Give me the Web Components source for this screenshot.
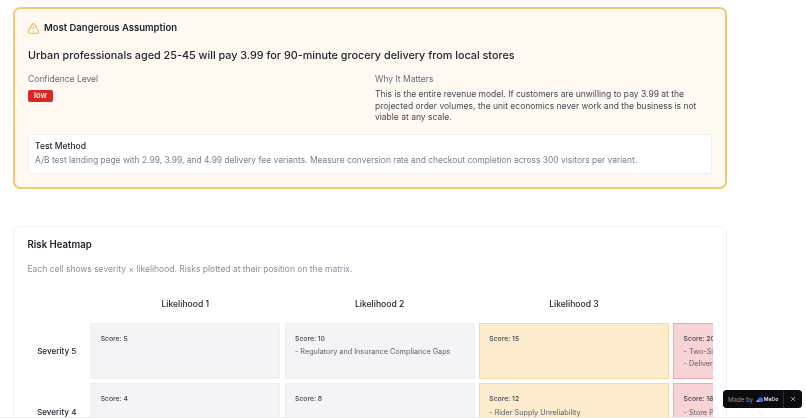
<!DOCTYPE html>
<html lang="en"><head><meta charset="utf-8"><title>Risk</title>
<style>
html,body{margin:0;height:418px;overflow:hidden;background:#fff}
body{font-family:Inter,"Open Sans",sans-serif;color:#1f2430;padding:7px 0 0 13px;box-sizing:border-box}
</style></head><body>
<assumption-card>
  <span slot="title">Most Dangerous Assumption</span>
  <span slot="headline">Urban professionals aged 25-45 will pay 3.99 for 90-minute grocery delivery from local stores</span>
  <span slot="level">low</span>
  <span slot="why">This is the entire revenue model. If customers are unwilling to pay 3.99 at the projected order volumes, the unit economics never work and the business is not viable at any scale.</span>
  <span slot="method">A/B test landing page with 2.99, 3.99, and 4.99 delivery fee variants. Measure conversion rate and checkout completion across 300 visitors per variant.</span>
</assumption-card>
<heatmap-card>
  <heat-head slot="cells"></heat-head>
  <heat-head slot="cells">Likelihood 1</heat-head>
  <heat-head slot="cells">Likelihood 2</heat-head>
  <heat-head slot="cells">Likelihood 3</heat-head>
  <heat-head slot="cells">Likelihood 4</heat-head>
  <heat-side slot="cells">Severity 5</heat-side>
  <heat-cell slot="cells" score="5"></heat-cell>
  <heat-cell slot="cells" score="10"><div>- Regulatory and Insurance Compliance Gaps</div></heat-cell>
  <heat-cell slot="cells" score="15" tone="mid"></heat-cell>
  <heat-cell slot="cells" score="20" tone="high"><div>- Two-Sided</div><div>- Delivery</div></heat-cell>
  <heat-side slot="cells">Severity 4</heat-side>
  <heat-cell slot="cells" score="4"></heat-cell>
  <heat-cell slot="cells" score="8"></heat-cell>
  <heat-cell slot="cells" score="12" tone="mid"><div>- Rider Supply Unreliability</div></heat-cell>
  <heat-cell slot="cells" score="16" tone="high"><div>- Store P</div></heat-cell>
</heatmap-card>
<made-by></made-by>
<page-edge></page-edge>
<script>
function def(name, html){
  customElements.define(name, class extends HTMLElement{
    constructor(){super();const r=this.attachShadow({mode:'open'});r.innerHTML=typeof html==='function'?html(this):html;}
  });
}
def('page-edge',`<style>:host{position:fixed;left:0;right:0;bottom:0;height:1px;background:#ececee;display:block}</style>`);
def('assumption-card',`<style>
:host{display:block;box-sizing:border-box;width:714px;height:182px;background:#fff9f2;border:2px solid #f1c777;border-radius:7px;padding:12px 13px;filter:blur(.3px)}
.t{display:flex;align-items:center;gap:4.2px;font-size:9.5px;font-weight:600;line-height:14px;color:#22252e}
svg{width:12.8px;height:12.8px;display:block;flex:none;margin-left:-1px}
.h{margin-top:13px;font-size:10.81px;font-weight:500;line-height:16px;color:#22252e}
.g{display:grid;grid-template-columns:1fr 1fr;column-gap:10px;margin-top:9px}
.l{font-size:8.5px;line-height:12px;color:#666b78}
.b{display:block;width:fit-content;margin-top:5px;background:#dc2626;color:#fff;border-radius:2px;font-size:7.5px;font-weight:600;line-height:12px;padding:0 6px;height:12px}
.w{margin-top:4px;font-size:8.5px;line-height:11.7px;color:#454a55}
.m{box-sizing:border-box;height:40px;margin-top:9.5px;background:#fff;border:1px solid #f3efe9;border-radius:2px;padding:5.5px 6px}
.mt{font-size:8.54px;font-weight:500;line-height:13px;color:#22252e}
.md{margin-top:1px;font-size:8.44px;line-height:13px;color:#7b8090;white-space:nowrap}
</style>
<div class="t"><svg viewBox="0 0 24 24" fill="none" stroke="#eeb54a" stroke-width="2" stroke-linecap="round" stroke-linejoin="round"><path d="m21.73 18-8-14a2 2 0 0 0-3.48 0l-8 14A2 2 0 0 0 4 21h16a2 2 0 0 0 1.73-3"/><path d="M12 9v4"/><path d="M12 17h.01"/></svg><slot name="title"></slot></div>
<div class="h"><slot name="headline"></slot></div>
<div class="g"><div><div class="l">Confidence Level</div><span class="b"><slot name="level"></slot></span></div>
<div><div class="l">Why It Matters</div><div class="w"><slot name="why"></slot></div></div></div>
<div class="m"><div class="mt">Test Method</div><div class="md"><slot name="method"></slot></div></div>`);
def('heatmap-card',`<style>
:host{display:block;box-sizing:border-box;width:714px;margin-top:36.5px;height:300px;background:#fff;border:1px solid #f1f1f3;border-radius:7px;padding:11px 13.5px;filter:blur(.3px)}
.t{font-size:9.67px;font-weight:600;line-height:14px;color:#22252e}
.d{margin-top:11.5px;font-size:8.49px;line-height:12px;color:#8a8f9c}
.s{margin-top:20.7px;overflow:hidden;width:685.5px}
.g{display:grid;grid-template-columns:58.5px repeat(4,190px);grid-template-rows:22.8px;grid-auto-rows:56px;column-gap:4.3px;row-gap:4.5px;width:max-content}
</style>
<div class="t">Risk Heatmap</div>
<div class="d">Each cell shows severity × likelihood. Risks plotted at their position on the matrix.</div>
<div class="s"><div class="g"><slot name="cells"></slot></div></div>`);
def('heat-head',`<style>:host{display:flex;align-items:flex-start;justify-content:center;font-size:8.59px;line-height:12px;font-weight:500;color:#22252e;padding-top:2px}</style><slot></slot>`);
def('heat-side',`<style>:host{display:flex;align-items:center;justify-content:center;font-size:8.14px;line-height:12px;font-weight:500;color:#22252e;padding-top:1px;box-sizing:border-box}</style><slot></slot>`);
def('heat-cell',el=>{
  const t=el.getAttribute('tone');
  const bg=t==='mid'?'#fdebcd':t==='high'?'#f8d3d6':'#f4f4f6';
  const bd=t==='mid'?'#fad7a2':t==='high'?'#efa9ae':'#eef0f3';
  return `<style>:host{display:block;box-sizing:border-box;background:${bg};border:1px solid ${bd};padding:8.8px 9.4px;overflow:hidden}
.s{font-size:6.8px;font-weight:500;line-height:11px;color:#3f444f;margin-bottom:2.35px}
.c{font-size:7.25px;line-height:11.7px;color:#5a5f6b;white-space:nowrap;display:block}
</style><div class="s">Score: ${el.getAttribute('score')}</div><div class="c"><slot></slot></div>`;
});
def('made-by',`<style>
:host{position:fixed;left:723px;top:390px;width:79px;height:18px;background:#0c0c10;border-radius:3.5px;display:flex;align-items:center;color:#8f8f97;font-size:6.1px;font-family:Inter,sans-serif;filter:blur(.25px)}
.a{display:flex;align-items:center;gap:3.2px;padding-left:5px;width:60px;box-sizing:border-box;white-space:nowrap}
b{color:#e4e4ea;font-weight:600;font-size:5.1px}
.l{display:flex;align-items:center;gap:.6px}
svg{display:block}
.x{flex:1;height:100%;border-left:1px solid #2c2c32;display:flex;align-items:center;justify-content:center}
</style>
<div class="a"><span>Made by</span><span class="l"><svg width="7" height="5" viewBox="0 0 7 5"><path d="M0 5 2.5 1.5 4 0 7 1.5V5z" fill="#2f6df0"/><path d="M0 5 2 2.6 3.5 5z" fill="#f58ab5"/></svg><b>MeDo</b></span></div>
<div class="x"><svg width="6" height="6" viewBox="0 0 6 6" stroke="#c9c9cf" stroke-width=".7" fill="none"><path d="M1 1l4 4M5 1 1 5"/></svg></div>`);
</script>
</body></html>
